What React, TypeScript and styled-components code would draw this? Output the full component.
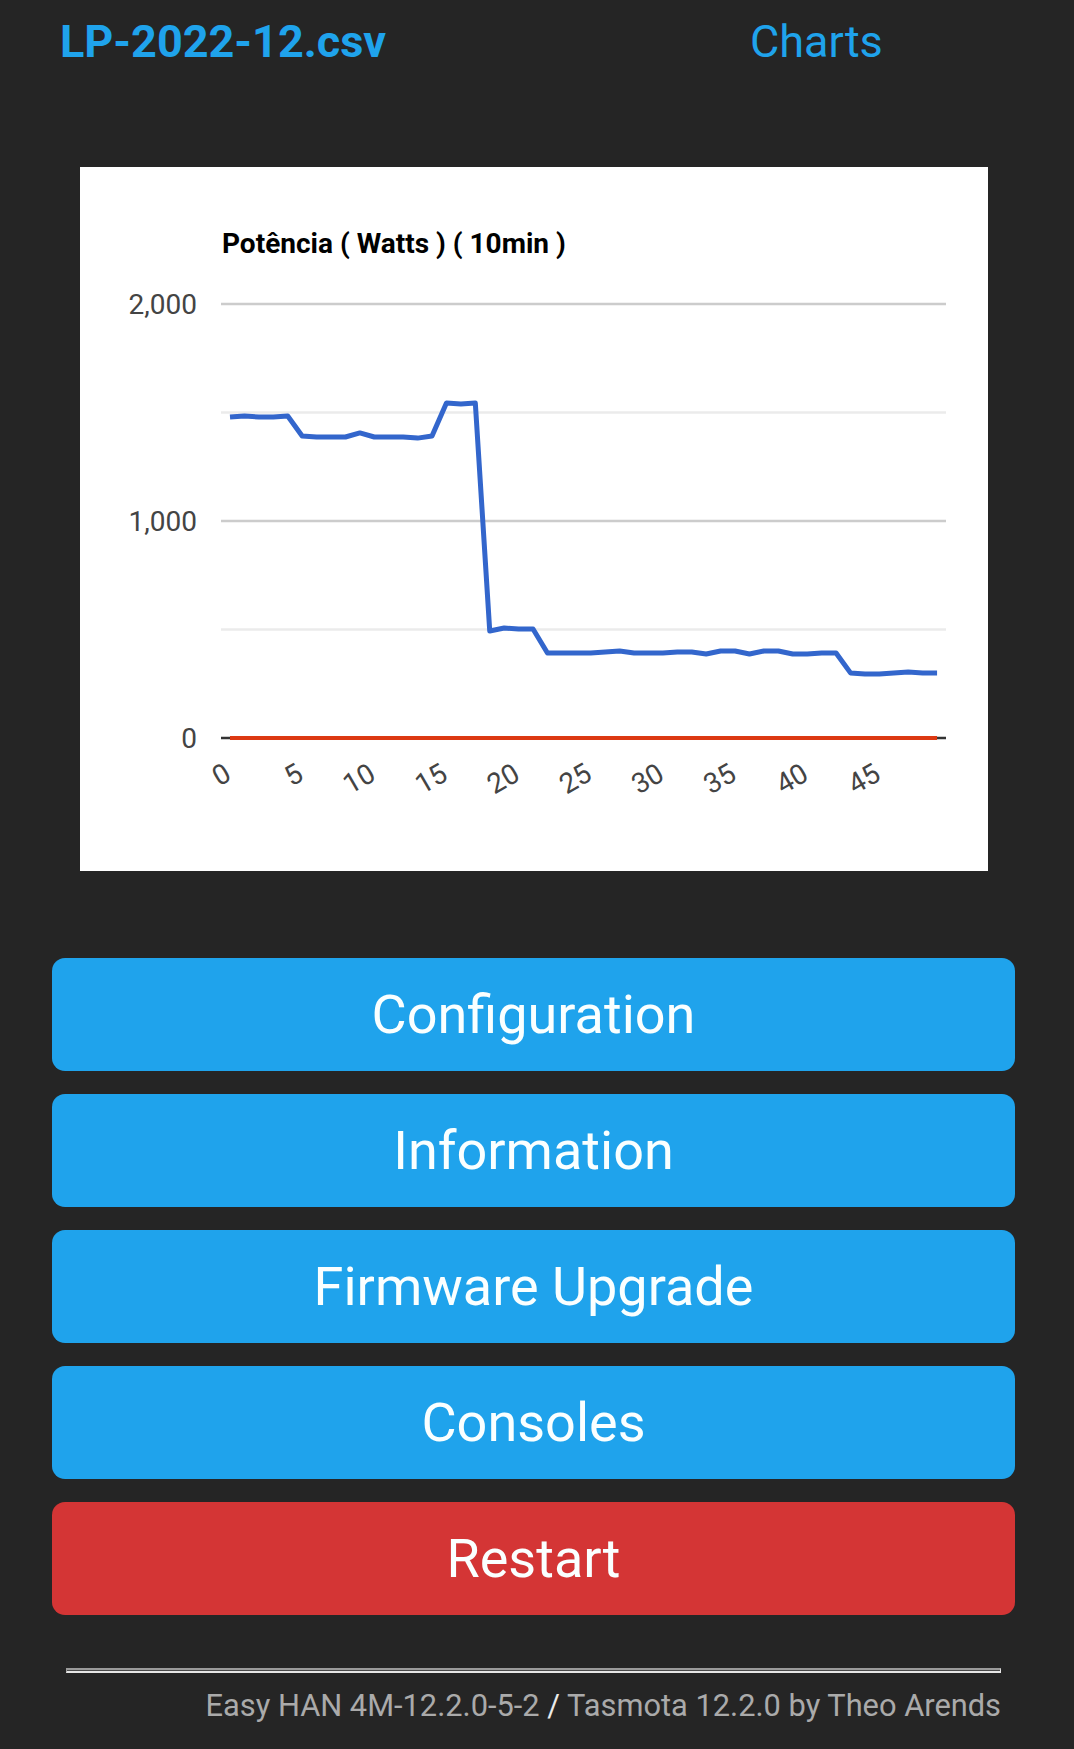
import styled, { createGlobalStyle } from "styled-components";

const GlobalStyle = createGlobalStyle`
  body {
    margin: 0;
    background: #252525;
    font-family: Roboto, "Liberation Sans", sans-serif;
  }
`;

const Page = styled.div`
  width: 1074px;
  min-height: 1749px;
  display: flex;
  flex-direction: column;
  color: #eaeaea;
`;

const Header = styled.div`
  display: grid;
  grid-template-columns: 690px auto;
  padding: 16px 0 0 60px;
  font-size: 45px;
  line-height: 52px;
`;

const HeaderLink = styled.a<{ $bold?: boolean }>`
  color: #1fa3ec;
  text-decoration: none;
  font-weight: ${({ $bold }) => ($bold ? 700 : 400)};
`;

const ChartCard = styled.div`
  margin: 99px 0 0 80px;
  width: 908px;
  height: 704px;
  background: #ffffff;
`;

const ChartTitle = styled.text`
  font-family: Roboto, "Liberation Sans", sans-serif;
  font-size: 28px;
  font-weight: 700;
  fill: #000000;
`;

const AxisLabel = styled.text`
  font-family: Roboto, "Liberation Sans", sans-serif;
  font-size: 28px;
  fill: #444444;
`;

const ButtonList = styled.div`
  margin: 87px 0 0 52px;
  width: 963px;
  display: flex;
  flex-direction: column;
  gap: 23px;
`;

const Button = styled.button<{ $danger?: boolean }>`
  height: 113px;
  border: 0;
  border-radius: 13px;
  background: ${({ $danger }) => ($danger ? "#d43535" : "#1fa3ec")};
  color: #faffff;
  font-family: Roboto, "Liberation Sans", sans-serif;
  font-size: 54px;
  line-height: 113px;
  padding: 0;
  cursor: pointer;
`;

const Footer = styled.div`
  margin: 53px 0 0 66px;
  width: 935px;
  text-align: right;
  font-size: 30.8px;
  line-height: 34px;
`;

const Rule = styled.hr`
  margin: 0 0 16px;
  height: 1px;
  background: #4a4a4a;
  border-style: solid;
  border-width: 2px 1px;
  border-color: #9a9a9a #e6e6e6 #e6e6e6 #9a9a9a;
`;

const FooterLink = styled.a`
  color: #aaaaaa;
  text-decoration: none;
`;

// watts per 10min slot, read off the chart
const power = [
  1479, 1484, 1479, 1479, 1484, 1392, 1387, 1387, 1387, 1406, 1387, 1387, 1387,
  1382, 1392, 1544, 1539, 1544, 493, 507, 502, 502, 392, 392, 392, 392, 396,
  401, 392, 392, 392, 396, 396, 387, 401, 401, 387, 401, 401, 387, 387, 392,
  392, 300, 295, 295, 300, 304, 300, 300,
];

const PLOT_LEFT = 141;
const PLOT_RIGHT = 866;
const ZERO_Y = 571;
const PX_PER_WATT = 0.217;
const X0 = 150;
const STEP = 14.43;

const xAt = (i: number) => X0 + i * STEP;
const yAt = (v: number) => ZERO_Y - v * PX_PER_WATT;

const grid = [
  { v: 2000, major: true },
  { v: 1500, major: false },
  { v: 1000, major: true },
  { v: 500, major: false },
];

const PowerChart = () => {
  const line = power.map((v, i) => `${xAt(i)},${yAt(v)}`).join(" ");
  const ticks = [0, 5, 10, 15, 20, 25, 30, 35, 40, 45];

  return (
    <svg width="908" height="704" viewBox="0 0 908 704">
      <ChartTitle x={142} y={86}>
        Potência ( Watts ) ( 10min )
      </ChartTitle>
      {grid.map((g) => (
        <line
          key={g.v}
          x1={PLOT_LEFT}
          x2={PLOT_RIGHT}
          y1={yAt(g.v)}
          y2={yAt(g.v)}
          stroke={g.major ? "#cccccc" : "#ebebeb"}
          strokeWidth={2.5}
        />
      ))}
      {[2000, 1000, 0].map((v) => (
        <AxisLabel key={v} x={117} y={yAt(v) + 10} textAnchor="end">
          {v.toLocaleString("en-US")}
        </AxisLabel>
      ))}
      <line
        x1={PLOT_LEFT}
        x2={PLOT_RIGHT}
        y1={ZERO_Y}
        y2={ZERO_Y}
        stroke="#333333"
        strokeWidth={2.5}
      />
      <line
        x1={xAt(0)}
        x2={xAt(power.length - 1)}
        y1={ZERO_Y}
        y2={ZERO_Y}
        stroke="#dc3912"
        strokeWidth={4}
      />
      <polyline
        points={line}
        fill="none"
        stroke="#3366cc"
        strokeWidth={5}
        strokeLinejoin="round"
      />
      {ticks.map((t) => {
        const tx = xAt(t) + 3;
        const ty = 612;
        return (
          <AxisLabel
            key={t}
            x={tx}
            y={ty}
            textAnchor="end"
            transform={`rotate(-30 ${tx} ${ty})`}
          >
            {t}
          </AxisLabel>
        );
      })}
    </svg>
  );
};

const buttons = [
  { label: "Configuration" },
  { label: "Information" },
  { label: "Firmware Upgrade" },
  { label: "Consoles" },
  { label: "Restart", danger: true },
];

export default function App() {
  return (
    <>
      <GlobalStyle />
      <Page>
        <Header>
          <HeaderLink href="#" $bold>
            LP-2022-12.csv
          </HeaderLink>
          <HeaderLink href="#">Charts</HeaderLink>
        </Header>
        <ChartCard>
          <PowerChart />
        </ChartCard>
        <ButtonList>
          {buttons.map((b) => (
            <Button key={b.label} $danger={b.danger}>
              {b.label}
            </Button>
          ))}
        </ButtonList>
        <Footer>
          <Rule />
          <FooterLink href="#">Easy HAN 4M-12.2.0-5-2</FooterLink> /{" "}
          <FooterLink href="#">Tasmota 12.2.0 by Theo Arends</FooterLink>
        </Footer>
      </Page>
    </>
  );
}
